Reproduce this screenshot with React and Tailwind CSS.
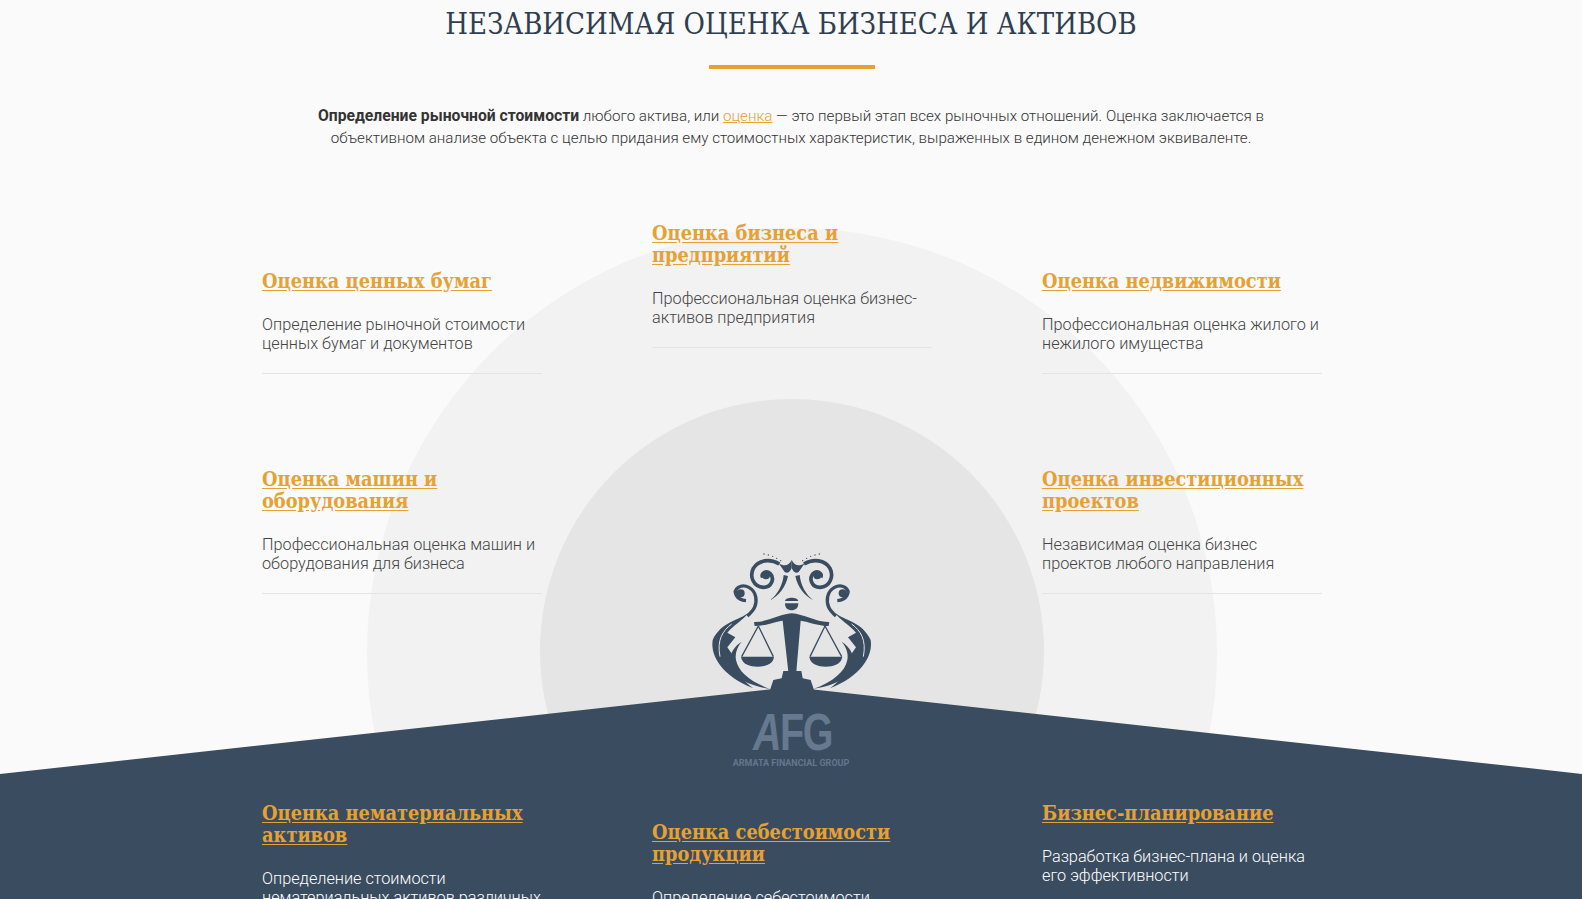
import React from "react"

const serif = "font-['DejaVu_Serif_Condensed','DejaVu_Serif',serif]"
const body = "font-['Roboto','Noto_Sans',sans-serif]"

const Card = ({ title, text, dark, className = "" }) => (
    <div className={`${dark ? "" : "border-b border-[#e4e4e4] pb-5"} ${className}`}>
        <h3 className={`${serif} font-bold text-[19.8px] leading-[22px] text-[#e5a232] underline underline-offset-2 mb-[23px]`}>
            {title}
        </h3>
        <p className={`${body} font-light text-[16.25px] leading-[19px] ${dark ? "text-white" : "text-[#444]"}`}>{text}</p>
    </div>
)

// one half of the logo, mirrored for the right side
const LogoHalf = ({ mirror }) => (
    <g transform={mirror ? "translate(610,0) scale(-1,1)" : undefined}>
        {[[222, 42], [235, 45], [248, 49], [260, 55], [272, 62]].map(([x, y]) => (
            <circle key={x} cx={x} cy={y} r="2" fill="#3a4c60" />
        ))}
        <path d="M305 60 C297 75 285 82 266 70 L284 96 C292 102 300 96 305 84 Z" fill="#3a4c60" />
        <path d="M268 72 C240 55 205 60 190 85 C178 110 190 140 220 142 C245 142 255 115 240 100 C228 90 212 100 218 112" fill="none" stroke="#3a4c60" strokeWidth="11" />
        <circle cx="228" cy="106" r="12" fill="#3a4c60" />
        <path d="M294 108 C288 140 265 170 240 180 C262 165 278 135 281 105 Z" fill="#3a4c60" />
        <path d="M168 182 C140 180 126 155 145 142 C165 130 192 145 197 170 C202 195 192 210 172 228" fill="none" stroke="#3a4c60" strokeWidth="10" />
        <circle cx="152" cy="160" r="12" fill="#3a4c60" />
        <path d="M175 218 C150 240 92 245 68 300 C60 350 100 410 190 445 C150 415 122 375 128 345 L112 322 L136 292 L112 278 C130 255 160 240 175 218 Z" fill="#3a4c60" />
        <path d="M125 252 C98 272 80 300 90 350" fill="none" stroke="#e5e5e5" strokeWidth="3" />
        <path d="M155 305 C128 322 112 350 125 385 C135 410 165 435 240 447 C180 425 145 395 138 360 C134 340 142 320 155 305 Z" fill="#3a4c60" />
        <path d="M205 258 L155 350 M205 258 L250 350" stroke="#3a4c60" strokeWidth="4" fill="none" />
        <path d="M153 350 H252 C250 372 225 380 203 380 C180 380 156 372 153 350 Z" fill="#3a4c60" />
    </g>
)

const Logo = () => (
    <svg viewBox="0 0 600 720" className="w-[200px] h-[240px]">
        <LogoHalf />
        <LogoHalf mirror />
        <path d="M285 183 C287 170 323 170 325 183 Z M285 190 H325 C325 205 316 211 305 211 C294 211 285 205 285 190 Z" fill="#3a4c60" />
        <path d="M192 246 C230 248 268 222 305 220 C342 222 380 248 418 246 L416 258 C385 258 350 244 332 242 L319 395 H295 L278 242 C260 244 225 258 194 258 Z" fill="#3a4c60" />
        <path d="M280 393 H334 L338 415 L362 420 L372 450 H240 L250 420 L275 415 Z" fill="#3a4c60" />
    </svg>
)

const App = () => {
    return (
        <div className="relative h-[899px] overflow-hidden bg-[#fafafa]">
            {/* background circles */}
            <div className="absolute left-[367px] top-[228px] w-[850px] h-[850px] rounded-full bg-[#f2f2f2]"></div>
            <div className="absolute left-[540px] top-[399px] w-[504px] h-[504px] rounded-full bg-[#e5e5e5]"></div>

            <div className="relative h-[687px]">
                <h1 className={`${serif} text-center text-[29px] leading-[46px] text-[#2f3e50] pt-px`}>НЕЗАВИСИМАЯ ОЦЕНКА БИЗНЕСА И АКТИВОВ</h1>
                <div className="w-[166px] h-1 bg-[#e5a232] mx-auto mt-[18px] translate-x-px"></div>
                <p className={`${body} font-light text-[15.15px] leading-[22px] text-[#333] text-center w-[960px] mx-auto mt-9`}>
                    <b className="font-bold text-[15.7px]">Определение рыночной стоимости</b> любого актива, или <a className="text-[#e5a232] underline">оценка</a> — это первый этап всех рыночных отношений. Оценка заключается в объективном анализе объекта с целью придания ему стоимостных характеристик, выраженных в едином денежном эквиваленте.
                </p>

                <div className="grid grid-cols-[280px_280px_280px] gap-x-[110px] w-[1060px] ml-[262px]">
                    <div className="pt-[121px]">
                        <Card title="Оценка ценных бумаг" text="Определение рыночной стоимости ценных бумаг и документов" />
                        <Card className="mt-[94px]" title="Оценка машин и оборудования" text="Профессиональная оценка машин и оборудования для бизнеса" />
                    </div>
                    <div className="pt-[73px]">
                        <Card title="Оценка бизнеса и предприятий" text="Профессиональная оценка бизнес-активов предприятия" />
                    </div>
                    <div className="pt-[121px]">
                        <Card title="Оценка недвижимости" text="Профессиональная оценка жилого и нежилого имущества" />
                        <Card className="mt-[94px]" title="Оценка инвестиционных проектов" text="Независимая оценка бизнес проектов любого направления" />
                    </div>
                </div>
            </div>

            {/* dark block with the sloped top */}
            <div className="relative h-[212px] bg-[#3a4c60] [clip-path:polygon(0_87px,50%_0,100%_87px,100%_100%,0_100%)]">
                <div className="grid grid-cols-[280px_280px_280px] gap-x-[110px] w-[1060px] ml-[262px]">
                    <div className="pt-[115px]">
                        <Card dark title="Оценка нематериальных активов" text="Определение стоимости нематериальных активов различных видов" />
                    </div>
                    <div className="pt-[134px]">
                        <Card dark title="Оценка себестоимости продукции" text="Определение себестоимости продукции предприятия" />
                    </div>
                    <div className="pt-[115px]">
                        <Card dark title="Бизнес-планирование" text="Разработка бизнес-плана и оценка его эффективности" />
                    </div>
                </div>
            </div>

            {/* logo over both blocks */}
            <div className="absolute left-[690px] top-[540px] w-[200px] h-[240px]">
                <Logo />
                <span className="absolute left-[63px] top-[167px] origin-left scale-x-[0.76] font-['Liberation_Sans',sans-serif] font-bold text-[52px] leading-[50px] tracking-[-2px] text-[#66798e]"><i>A</i>FG</span>
                <span className="absolute left-[2px] right-0 top-[217px] text-center font-['Roboto',sans-serif] font-bold text-[9px] leading-[12px] text-[#63778c]">ARMATA FINANCIAL GROUP</span>
            </div>
        </div>
    )
}

export default App
